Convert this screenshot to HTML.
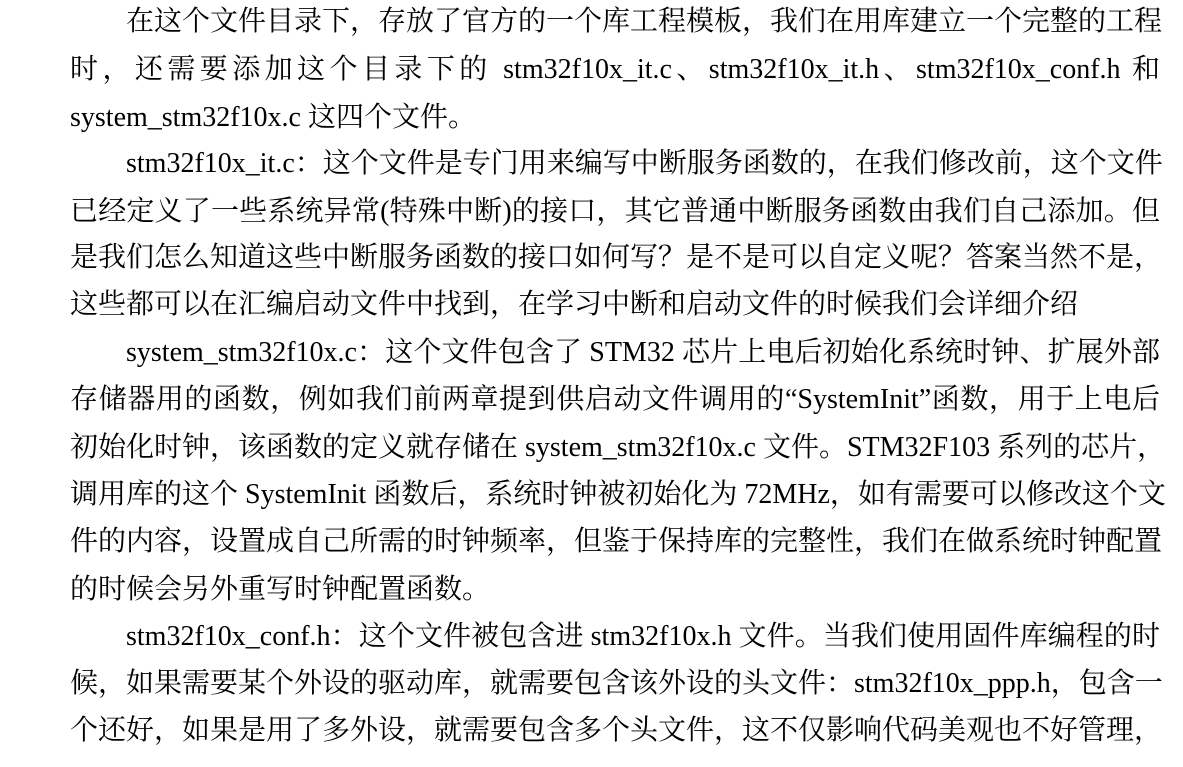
<!DOCTYPE html>
<html><head><meta charset="utf-8"><style>
html,body{margin:0;padding:0;background:#fff;}
body{width:1183px;height:767px;position:relative;overflow:hidden;}
.l{position:absolute;left:70px;width:1090px;height:47px;line-height:47px;font-size:28px;color:#000;
font-family:"Liberation Serif","Noto Serif CJK SC",serif;white-space:nowrap;text-align:justify;text-align-last:justify;}
.i{left:126px;width:1034px;}
.e{text-align-last:left;}
</style></head><body>
<div class="l i" style="top:-2px">在这个文件目录下，存放了官方的一个库工程模板，我们在用库建立一个完整的工程</div>
<div class="l" style="top:46px">时，还需要添加这个目录下的 stm32f10x_it.c、stm32f10x_it.h、stm32f10x_conf.h 和</div>
<div class="l e" style="top:94px">system_stm32f10x.c 这四个文件。</div>
<div class="l i" style="top:140px">stm32f10x_it.c：这个文件是专门用来编写中断服务函数的，在我们修改前，这个文件</div>
<div class="l" style="top:188px">已经定义了一些系统异常(特殊中断)的接口，其它普通中断服务函数由我们自己添加。但</div>
<div class="l" style="top:234px">是我们怎么知道这些中断服务函数的接口如何写？是不是可以自定义呢？答案当然不是，</div>
<div class="l e" style="top:281px">这些都可以在汇编启动文件中找到，在学习中断和启动文件的时候我们会详细介绍</div>
<div class="l i" style="top:329px">system_stm32f10x.c：这个文件包含了 STM32 芯片上电后初始化系统时钟、扩展外部</div>
<div class="l" style="top:376px">存储器用的函数，例如我们前两章提到供启动文件调用的“SystemInit”函数，用于上电后</div>
<div class="l" style="top:424px">初始化时钟，该函数的定义就存储在 system_stm32f10x.c 文件。STM32F103 系列的芯片，</div>
<div class="l" style="top:471px">调用库的这个 SystemInit 函数后，系统时钟被初始化为 72MHz，如有需要可以修改这个文</div>
<div class="l" style="top:518px">件的内容，设置成自己所需的时钟频率，但鉴于保持库的完整性，我们在做系统时钟配置</div>
<div class="l e" style="top:566px">的时候会另外重写时钟配置函数。</div>
<div class="l i" style="top:613px">stm32f10x_conf.h：这个文件被包含进 stm32f10x.h 文件。当我们使用固件库编程的时</div>
<div class="l" style="top:660px">候，如果需要某个外设的驱动库，就需要包含该外设的头文件：stm32f10x_ppp.h，包含一</div>
<div class="l" style="top:707px">个还好，如果是用了多外设，就需要包含多个头文件，这不仅影响代码美观也不好管理，</div>
</body></html>
